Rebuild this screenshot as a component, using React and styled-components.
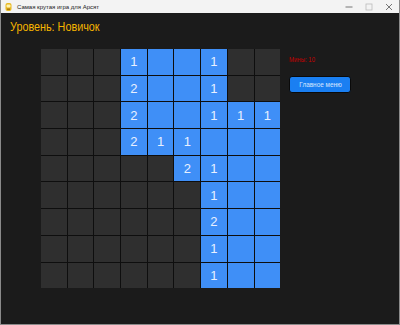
import React from "react";
import styled, { createGlobalStyle } from "styled-components";

const Global = createGlobalStyle`
  html, body {
    margin: 0;
    padding: 0;
    background: #1b1b1b;
  }
`;

// board: "." closed, "o" open blank, digit = open with number
const BOARD = [
  "...1oo1..",
  "...2oo1..",
  "...2oo111",
  "...211ooo",
  ".....21oo",
  "......1oo",
  "......2oo",
  "......1oo",
  "......1oo",
];

const App = () => {
  return (
    <Window>
      <Global />
      <TitleBar>
        <AppIcon>
          <svg width="9" height="10" viewBox="0 0 9 10">
            <rect x="1.5" y="1" width="6" height="8" rx="2" fill="#e8b923" />
            <rect x="2.5" y="2.5" width="4" height="3" rx="1" fill="#fff3b0" />
            <rect x="3" y="6.5" width="3" height="1.5" fill="#b07d10" />
          </svg>
        </AppIcon>
        <WinTitle>Самая крутая игра для Арсят</WinTitle>
        <Controls>
          <Ctl>
            <svg width="8" height="8" viewBox="0 0 8 8">
              <line x1="0.5" y1="4" x2="7.5" y2="4" stroke="#555" strokeWidth="0.8" />
            </svg>
          </Ctl>
          <Ctl>
            <svg width="8" height="8" viewBox="0 0 8 8">
              <rect x="1" y="1" width="6" height="6" fill="none" stroke="#bbb" strokeWidth="0.8" />
            </svg>
          </Ctl>
          <Ctl>
            <svg width="8" height="8" viewBox="0 0 8 8">
              <path d="M1 1 L7 7 M7 1 L1 7" stroke="#555" strokeWidth="0.8" />
            </svg>
          </Ctl>
        </Controls>
      </TitleBar>
      <Content>
        <Level>
          <Narrow>Уровень: Новичок</Narrow>
        </Level>
        <Main>
          <Board>
            {BOARD.map((row, r) =>
              row.split("").map((ch, c) => (
                <Cell key={r + "-" + c} open={ch !== "."}>
                  {ch !== "." && ch !== "o" ? ch : ""}
                </Cell>
              ))
            )}
          </Board>
          <Side>
            <Mines>
              <Narrow>Мины: 10</Narrow>
            </Mines>
            <MenuButton>
              <Narrow center>Главное меню</Narrow>
            </MenuButton>
          </Side>
        </Main>
      </Content>
    </Window>
  );
};

export default App;

const Window = styled.div`
  width: 400px;
  height: 325px;
  display: flex;
  flex-direction: column;
  box-sizing: border-box;
  border: 1px solid #8a8a8a;
  border-top: none;
  font-family: "Liberation Sans", Arial, sans-serif;
  overflow: hidden;
`;

const Narrow = styled.span`
  display: inline-block;
  white-space: nowrap;
  transform: scaleX(0.8);
  transform-origin: ${(p) => (p.center ? "center" : "left")};
`;

const TitleBar = styled.div`
  height: 13px;
  background: #f3f3f3;
  display: flex;
  align-items: center;
  padding-left: 3px;
`;

const AppIcon = styled.div`
  width: 10px;
  display: flex;
  align-items: center;
`;

const WinTitle = styled.div`
  font-size: 6px;
  color: #222;
  margin-left: 3px;
  flex: 1;
`;

const Controls = styled.div`
  display: flex;
  height: 100%;
`;

const Ctl = styled.div`
  width: 20px;
  display: flex;
  align-items: center;
  justify-content: center;
`;

const Content = styled.div`
  flex: 1;
  background: #1b1b1b;
  padding: 5px 0 0 9px;
`;

const Level = styled.h1`
  margin: 0;
  font-size: 13.5px;
  line-height: 17px;
  font-weight: normal;
  color: #f5b400;
`;

const Main = styled.div`
  display: flex;
  align-items: flex-start;
  margin-top: 14px;
  padding-left: 31px;
`;

const Board = styled.div`
  display: grid;
  grid-template-columns: repeat(9, 25.7px);
  grid-auto-rows: 25.7px;
  gap: 1px;
  background: #0e0e0e;
`;

const Cell = styled.div`
  background: ${(p) => (p.open ? "#3f8ff7" : "#2f2f2f")};
  color: #e8f0ff;
  font-size: 13px;
  display: flex;
  align-items: center;
  justify-content: center;
`;

const Side = styled.div`
  display: flex;
  flex-direction: column;
  align-items: flex-start;
  margin-left: 9px;
  padding-top: 6px;
`;

const Mines = styled.div`
  font-size: 7.5px;
  color: #c40000;
`;

const MenuButton = styled.button`
  margin-top: 12px;
  width: 62px;
  height: 17px;
  padding: 0;
  background: #1a7ff2;
  border: 1px solid #0a0a0a;
  border-radius: 3px;
  color: #d8e6ff;
  font-family: "Liberation Sans", Arial, sans-serif;
  font-size: 8px;
  display: flex;
  align-items: center;
  justify-content: center;
`;
